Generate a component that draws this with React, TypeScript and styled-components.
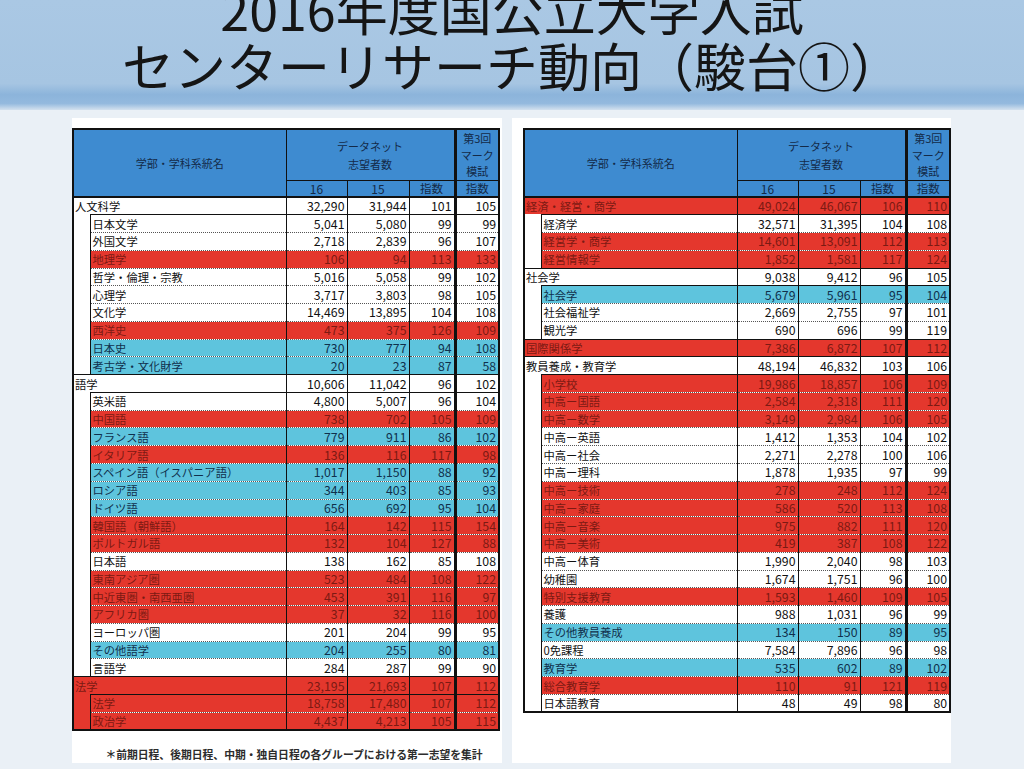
import React from 'react'
import styled, { createGlobalStyle } from 'styled-components'

type Tone = 'w' | 'r' | 'c'
type Edge = 'solid' | 'dotted'

type Entry = { name: string; v: string[]; tone: Tone }
type Group = Entry & { indent: Tone; items: Entry[] }

const tones: Record<Tone, { bg: string; fg: string }> = {
  w: { bg: '#ffffff', fg: '#111111' },
  r: { bg: '#e4372d', fg: '#7c1a13' },
  c: { bg: '#5ec4dd', fg: '#10304c' },
}

const e = (name: string, a: string, b: string, c: string, d: string, tone: Tone = 'w'): Entry => ({
  name,
  v: [a, b, c, d],
  tone,
})

const g = (head: Entry, indent: Tone, items: Entry[]): Group => ({ ...head, indent, items })

const leftGroups: Group[] = [
  g(e('人文科学', '32,290', '31,944', '101', '105'), 'w', [
    e('日本文学', '5,041', '5,080', '99', '99'),
    e('外国文学', '2,718', '2,839', '96', '107'),
    e('地理学', '106', '94', '113', '133', 'r'),
    e('哲学・倫理・宗教', '5,016', '5,058', '99', '102'),
    e('心理学', '3,717', '3,803', '98', '105'),
    e('文化学', '14,469', '13,895', '104', '108'),
    e('西洋史', '473', '375', '126', '109', 'r'),
    e('日本史', '730', '777', '94', '108', 'c'),
    e('考古学・文化財学', '20', '23', '87', '58', 'c'),
  ]),
  g(e('語学', '10,606', '11,042', '96', '102'), 'w', [
    e('英米語', '4,800', '5,007', '96', '104'),
    e('中国語', '738', '702', '105', '109', 'r'),
    e('フランス語', '779', '911', '86', '102', 'c'),
    e('イタリア語', '136', '116', '117', '98', 'r'),
    e('スペイン語（イスパニア語）', '1,017', '1,150', '88', '92', 'c'),
    e('ロシア語', '344', '403', '85', '93', 'c'),
    e('ドイツ語', '656', '692', '95', '104', 'c'),
    e('韓国語（朝鮮語）', '164', '142', '115', '154', 'r'),
    e('ポルトガル語', '132', '104', '127', '88', 'r'),
    e('日本語', '138', '162', '85', '108'),
    e('東南アジア圏', '523', '484', '108', '122', 'r'),
    e('中近東圏・南西亜圏', '453', '391', '116', '97', 'r'),
    e('アフリカ圏', '37', '32', '116', '100', 'r'),
    e('ヨーロッパ圏', '201', '204', '99', '95'),
    e('その他語学', '204', '255', '80', '81', 'c'),
    e('言語学', '284', '287', '99', '90'),
  ]),
  g(e('法学', '23,195', '21,693', '107', '112', 'r'), 'r', [
    e('法学', '18,758', '17,480', '107', '112', 'r'),
    e('政治学', '4,437', '4,213', '105', '115', 'r'),
  ]),
]

const rightGroups: Group[] = [
  g(e('経済・経営・商学', '49,024', '46,067', '106', '110', 'r'), 'w', [
    e('経済学', '32,571', '31,395', '104', '108'),
    e('経営学・商学', '14,601', '13,091', '112', '113', 'r'),
    e('経営情報学', '1,852', '1,581', '117', '124', 'r'),
  ]),
  g(e('社会学', '9,038', '9,412', '96', '105'), 'w', [
    e('社会学', '5,679', '5,961', '95', '104', 'c'),
    e('社会福祉学', '2,669', '2,755', '97', '101'),
    e('観光学', '690', '696', '99', '119'),
  ]),
  g(e('国際関係学', '7,386', '6,872', '107', '112', 'r'), 'w', []),
  g(e('教員養成・教育学', '48,194', '46,832', '103', '106'), 'w', [
    e('小学校', '19,986', '18,857', '106', '109', 'r'),
    e('中高ー国語', '2,584', '2,318', '111', '120', 'r'),
    e('中高ー数学', '3,149', '2,984', '106', '105', 'r'),
    e('中高ー英語', '1,412', '1,353', '104', '102'),
    e('中高ー社会', '2,271', '2,278', '100', '106'),
    e('中高ー理科', '1,878', '1,935', '97', '99'),
    e('中高ー技術', '278', '248', '112', '124', 'r'),
    e('中高ー家庭', '586', '520', '113', '108', 'r'),
    e('中高ー音楽', '975', '882', '111', '120', 'r'),
    e('中高ー美術', '419', '387', '108', '122', 'r'),
    e('中高ー体育', '1,990', '2,040', '98', '103'),
    e('幼稚園', '1,674', '1,751', '96', '100'),
    e('特別支援教育', '1,593', '1,460', '109', '105', 'r'),
    e('養護', '988', '1,031', '96', '99'),
    e('その他教員養成', '134', '150', '89', '95', 'c'),
    e('0免課程', '7,584', '7,896', '96', '98'),
    e('教育学', '535', '602', '89', '102', 'c'),
    e('総合教育学', '110', '91', '121', '119', 'r'),
    e('日本語教育', '48', '49', '98', '80'),
  ]),
]

const GlobalStyle = createGlobalStyle`
  html, body {
    margin: 0;
    padding: 0;
  }
  body {
    width: 1024px;
    height: 769px;
    overflow: hidden;
    background: #eaf0f6;
    font-family: 'Noto Sans CJK JP', 'Noto Sans', sans-serif;
    color: #111;
  }
`

const Banner = styled.header`
  height: 110px;
  overflow: hidden;
  background: linear-gradient(
    to bottom,
    #aac8e4 0%,
    #a6c5e2 76%,
    #8cb4db 86%,
    #93b9de 94%,
    #d3e1ee 100%
  );
`

const Title = styled.h1`
  margin: -19px 0 0;
  font-size: 52px;
  line-height: 56px;
  font-weight: 400;
  text-align: center;
  color: #151515;
`

const Main = styled.main`
  display: grid;
  grid-template-columns: 430px 439px;
  grid-template-rows: 645px;
  column-gap: 10px;
  padding: 8px 0 0 72px;
`

const Panel = styled.section<{ $inset: number }>`
  background: #fff;
  display: flex;
  flex-direction: column;
  padding: 10px 0 2px ${(p) => p.$inset}px;
`

const Note = styled.p`
  margin: auto 0 0;
  padding-left: 14px;
  font-size: 10.8px;
  line-height: 14px;
  font-weight: 700;
  color: #2c2c2c;
  text-align: center;
`

const Sheet = styled.table`
  width: 426px;
  table-layout: fixed;
  border-collapse: collapse;
  border: 2px solid #111;
`

const Col = styled.col<{ $w: number }>`
  width: ${(p) => p.$w}px;
`

const HeadRow = styled.tr<{ $h: number }>`
  height: ${(p) => p.$h}px;
`

const Head = styled.th<{ $sep?: boolean; $lh?: number; $fs?: number; $bb?: number }>`
  background: #3e8bd0;
  color: #132a48;
  font-weight: 400;
  font-size: ${(p) => p.$fs ?? 11}px;
  line-height: ${(p) => p.$lh ?? 17}px;
  padding: 0;
  text-align: center;
  vertical-align: middle;
  border: 1px solid #111;
  border-left-width: ${(p) => (p.$sep ? 3 : 1)}px;
  border-bottom-width: ${(p) => p.$bb ?? 2}px;
`

const Line = styled.tr`
  height: 17.77px;
`

const Body = styled.td<{ $tone: Tone; $edge: Edge }>`
  background: ${(p) => tones[p.$tone].bg};
  color: ${(p) => tones[p.$tone].fg};
  border-top: 1px ${(p) => (p.$edge === 'solid' ? 'solid #111' : 'dotted #555')};
  border-bottom: none;
  padding: 0;
  line-height: 16px;
  white-space: nowrap;
  overflow: hidden;
`

const Name = styled(Body)<{ $sub?: boolean }>`
  font-size: 11.3px;
  padding-left: ${(p) => (p.$sub ? 2 : 1)}px;
  border-left: ${(p) => (p.$sub ? '1px solid #111' : 'none')};
`

const Num = styled(Body)<{ $sep?: boolean }>`
  font-size: 12.3px;
  text-align: right;
  padding-right: 2px;
  border-left: ${(p) => (p.$sep ? 3 : 1)}px solid #111;
`

const Indent = styled.td<{ $tone: Tone }>`
  background: ${(p) => tones[p.$tone].bg};
  border: none;
  padding: 0;
`

const DataTable = ({ groups }: { groups: Group[] }) => (
  <Sheet>
    <colgroup>
      <Col $w={17} />
      <Col $w={196} />
      <Col $w={61} />
      <Col $w={62} />
      <Col $w={46} />
      <Col $w={44} />
    </colgroup>
    <thead>
      <HeadRow $h={51}>
        <Head colSpan={2} rowSpan={2}>
          学部・学科系統名
        </Head>
        <Head colSpan={3} $bb={1} $lh={18}>
          データネット
          <br />
          志望者数
        </Head>
        <Head $sep $bb={1} $lh={16.5}>
          第3回
          <br />
          マーク
          <br />
          模試
        </Head>
      </HeadRow>
      <HeadRow $h={17}>
        <Head $fs={12} $lh={15}>16</Head>
        <Head $fs={12} $lh={15}>15</Head>
        <Head $fs={11.5} $lh={15}>指数</Head>
        <Head $sep $fs={11.5} $lh={15}>
          指数
        </Head>
      </HeadRow>
    </thead>
    <tbody>
      {groups.map((grp) => (
        <React.Fragment key={grp.name}>
          <Line>
            <Name colSpan={2} $tone={grp.tone} $edge="solid">
              {grp.name}
            </Name>
            {grp.v.map((x, i) => (
              <Num key={i} $tone={grp.tone} $edge="solid" $sep={i === 3}>
                {x}
              </Num>
            ))}
          </Line>
          {grp.items.map((it, k) => {
            const edge: Edge = k === 0 ? 'solid' : 'dotted'
            return (
              <Line key={it.name + k}>
                <Indent $tone={grp.indent} />
                <Name $sub $tone={it.tone} $edge={edge}>
                  {it.name}
                </Name>
                {it.v.map((x, i) => (
                  <Num key={i} $tone={it.tone} $edge={edge} $sep={i === 3}>
                    {x}
                  </Num>
                ))}
              </Line>
            )
          })}
        </React.Fragment>
      ))}
    </tbody>
  </Sheet>
)

export default function App() {
  return (
    <>
      <GlobalStyle />
      <Banner>
        <Title>
          2016年度国公立大学入試
          <br />
          センターリサーチ動向（駿台①）
        </Title>
      </Banner>
      <Main>
        <Panel $inset={0}>
          <DataTable groups={leftGroups} />
          <Note>＊前期日程、後期日程、中期・独自日程の各グループにおける第一志望を集計</Note>
        </Panel>
        <Panel $inset={11}>
          <DataTable groups={rightGroups} />
        </Panel>
      </Main>
    </>
  )
}
